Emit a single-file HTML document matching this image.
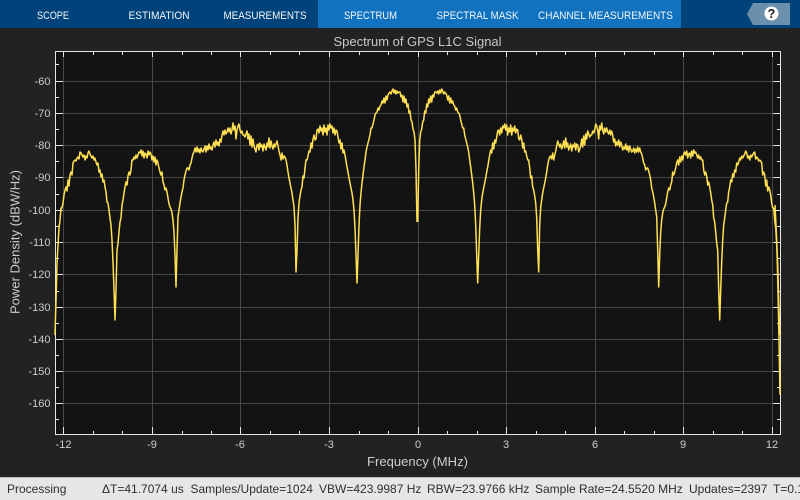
<!DOCTYPE html>
<html>
<head>
<meta charset="utf-8">
<style>
html,body{margin:0;padding:0;width:800px;height:500px;overflow:hidden;background:#222}
svg{display:block}
text{font-family:"Liberation Sans",sans-serif}
</style>
</head>
<body>
<svg width="800" height="500" viewBox="0 0 800 500" xmlns="http://www.w3.org/2000/svg">
<defs>
<clipPath id="c"><rect x="54" y="51" width="728" height="384"/></clipPath>
</defs>
<rect width="800" height="500" fill="#222222"/>
<!-- toolbar -->
<rect width="800" height="28" fill="#00437a"/>
<rect x="318" width="363" height="28" fill="#1172bf"/>
<g fill="#f2f6fa" font-size="11">
<text x="37" y="19" textLength="32" lengthAdjust="spacingAndGlyphs">SCOPE</text>
<text x="128.500" y="19" textLength="61" lengthAdjust="spacingAndGlyphs">ESTIMATION</text>
<text x="223.500" y="19" textLength="83" lengthAdjust="spacingAndGlyphs">MEASUREMENTS</text>
<text x="344" y="19" textLength="53" lengthAdjust="spacingAndGlyphs">SPECTRUM</text>
<text x="436.500" y="19" textLength="82" lengthAdjust="spacingAndGlyphs">SPECTRAL MASK</text>
<text x="538" y="19" textLength="135" lengthAdjust="spacingAndGlyphs">CHANNEL MEASUREMENTS</text>
</g>
<polygon points="747,14 753,3 790,3 790,25 753,25" fill="#6b90ae"/>
<circle cx="771.500" cy="13.500" r="7" fill="#ffffff"/>
<text x="771.500" y="18" font-size="12.500" font-weight="bold" fill="#1b1b1b" text-anchor="middle">?</text>
<!-- title -->
<text x="417.500" y="46" font-size="13" fill="#c8c8c8" text-anchor="middle" textLength="168" lengthAdjust="spacingAndGlyphs">Spectrum of GPS L1C Signal</text>
<!-- axes -->
<rect x="55.500" y="51.500" width="725" height="383" fill="#131313"/>
<g stroke="#474747" stroke-width="1" fill="none">
<path d="M63.500 52V434M152.500 52V434M240.500 52V434M329.500 52V434M418.500 52V434M506.500 52V434M595.500 52V434M683.500 52V434M772.500 52V434"/>
<path d="M56 81.500H780M56 113.500H780M56 145.500H780M56 177.500H780M56 210.500H780M56 242.500H780M56 274.500H780M56 307.500H780M56 339.500H780M56 371.500H780M56 403.500H780"/>
</g>
<!-- ticks -->
<g stroke="#e6e6e6" stroke-width="1" fill="none">
<path d="M63.500 52V57M152.500 52V57M240.500 52V57M329.500 52V57M418.500 52V57M506.500 52V57M595.500 52V57M683.500 52V57M772.500 52V57"/>
<path d="M93.500 52V55M122.500 52V55M182.500 52V55M211.500 52V55M270.500 52V55M299.500 52V55M359.500 52V55M388.500 52V55M447.500 52V55M477.500 52V55M536.500 52V55M565.500 52V55M624.500 52V55M654.500 52V55M713.500 52V55M742.500 52V55"/>
<path d="M63.500 434V427M152.500 434V427M240.500 434V427M329.500 434V427M418.500 434V427M506.500 434V427M595.500 434V427M683.500 434V427M772.500 434V427"/>
<path d="M93.500 434V431M122.500 434V431M182.500 434V431M211.500 434V431M270.500 434V431M299.500 434V431M359.500 434V431M388.500 434V431M447.500 434V431M477.500 434V431M536.500 434V431M565.500 434V431M624.500 434V431M654.500 434V431M713.500 434V431M742.500 434V431"/>
<path d="M56 81.500H63M56 113.500H63M56 145.500H63M56 177.500H63M56 210.500H63M56 242.500H63M56 274.500H63M56 307.500H63M56 339.500H63M56 371.500H63M56 403.500H63"/>
<path d="M56 64.500H59M56 97.500H59M56 129.500H59M56 161.500H59M56 194.500H59M56 226.500H59M56 258.500H59M56 291.500H59M56 323.500H59M56 355.500H59M56 387.500H59M56 419.500H59"/>
<path d="M780 81.500H773M780 113.500H773M780 145.500H773M780 177.500H773M780 210.500H773M780 242.500H773M780 274.500H773M780 307.500H773M780 339.500H773M780 371.500H773M780 403.500H773"/>
<path d="M780 64.500H777M780 97.500H777M780 129.500H777M780 161.500H777M780 194.500H777M780 226.500H777M780 258.500H777M780 291.500H777M780 323.500H777M780 355.500H777M780 387.500H777M780 419.500H777"/>
<rect x="55.500" y="51.500" width="725" height="383"/>
</g>
<!-- trace -->
<g clip-path="url(#c)" fill="none" stroke="#ffe052" stroke-width="1.500" stroke-linejoin="round">
<polyline id="t" points="55,335 56,300 57,263 58,245 59,228 60,220 61,208 62,208 63,203 64,195 65,190 66,187 67,191 68,180 69,186 70,175 71,172 72,175 73,163 74,161 75,160 76,161 77,158 78,157 79,159 80,152 81,153 82,155 83,157 84,155 85,160 86,156 87,158 88,153 89,151 90,154 91,156 92,158 93,156 94,160 95,158 96,162 97,165 98,163 99,172 100,170 101,177 102,174 103,182 104,180 105,187 106,192 107,202 108,203 109,210 110,218 111,225 112,240 113,262 114,290 115,320 116,290 117,250 118,243 119,232 120,222 121,218 122,205 123,200 124,193 125,187 126,182 127,185 128,176 129,172 130,175 131,170 132,160 133,160 134,157 135,159 136,155 137,158 138,155 139,152 140,153 141,150 142,156 143,151 144,158 145,153 146,154 147,158 148,151 149,155 150,152 151,154 152,160 153,156 154,162 155,157 156,165 157,160 158,163 159,168 160,172 161,175 162,172 163,182 164,185 165,190 166,188 167,192 168,198 169,204 170,207 171,209 172,213 173,220 174,232 175,255 176,287 177,250 178,217 179,210 180,203 181,197 182,192 183,188 184,180 185,175 186,171 187,168 188,168 189,170 190,165 191,163 192,158 193,154 194,152 195,148 196,152 197,147 198,152 199,149 200,153 201,148 202,151 203,152 204,149 205,146 206,152 207,146 208,150 209,144 210,149 211,147 212,150 213,145 214,142 215,147 216,140 217,145 218,142 219,146 220,139 221,142 222,135 223,131 224,135 225,130 226,134 227,132 228,128 229,132 230,128 231,134 232,130 233,123 234,130 235,126 236,139 237,130 238,126 239,124 240,130 241,133 242,131 243,135 244,135 245,137 246,134 247,131 248,139 249,134 250,145 251,136 252,147 253,139 254,146 255,149 256,152 257,145 258,144 259,150 260,143 261,147 262,145 263,151 264,144 265,147 266,150 267,143 268,147 269,138 270,148 271,141 272,146 273,149 274,144 275,147 276,144 277,141 278,146 279,151 280,155 281,160 282,153 283,159 284,156 285,157 286,160 287,165 288,172 289,178 290,183 291,188 292,193 293,200 294,207 295,225 296,272 297,250 298,218 299,203 300,196 301,190 302,187 303,176 304,178 305,168 306,160 307,160 308,156 309,151 310,152 311,143 312,148 313,139 314,135 315,140 316,139 317,130 318,129 319,133 320,126 321,131 322,128 323,135 324,125 325,132 326,128 327,135 328,125 329,130 330,124 331,128 332,126 333,133 334,128 335,135 336,130 337,131 338,137 339,143 340,140 341,149 342,143 343,153 344,150 345,155 346,161 347,167 348,172 349,178 350,183 351,188 352,193 353,200 354,210 355,228 356,255 357,283 358,255 359,225 360,205 361,193 362,183 363,175 364,167 365,160 366,152 367,147 368,143 369,139 370,135 371,128 372,128 373,124 374,120 375,115 376,113 377,112 378,108 379,110 380,106 381,105 382,101 383,103 384,98 385,103 386,96 387,100 388,95 389,93 390,92 391,94 392,91 393,89 394,93 395,90 396,94 397,91 398,93 399,92 400,92 401,97 402,95 403,102 404,96 405,103 406,99 407,107 408,104 409,113 410,111 411,120 412,122 413,129 414,132 415,140 416,170 417,222"/>
<use href="#t" transform="translate(834.700 0) scale(-1 1)"/>
<polyline points="775,205 776.700,240 778,290 779,340 780,395"/>
</g>
<!-- y tick labels -->
<g fill="#cccccc" font-size="11" text-anchor="end">
<text x="50.500" y="85">-60</text>
<text x="50.500" y="117">-70</text>
<text x="50.500" y="149">-80</text>
<text x="50.500" y="181">-90</text>
<text x="50.500" y="214">-100</text>
<text x="50.500" y="246">-110</text>
<text x="50.500" y="278">-120</text>
<text x="50.500" y="311">-130</text>
<text x="50.500" y="343">-140</text>
<text x="50.500" y="375">-150</text>
<text x="50.500" y="407">-160</text>
</g>
<!-- x tick labels -->
<g fill="#cccccc" font-size="11" text-anchor="middle">
<text x="63.500" y="448">-12</text>
<text x="152" y="448">-9</text>
<text x="240" y="448">-6</text>
<text x="329" y="448">-3</text>
<text x="418" y="448">0</text>
<text x="506" y="448">3</text>
<text x="595" y="448">6</text>
<text x="683" y="448">9</text>
<text x="772" y="448">12</text>
</g>
<text x="417.500" y="466" font-size="13" fill="#cccccc" text-anchor="middle" textLength="101" lengthAdjust="spacingAndGlyphs">Frequency (MHz)</text>
<text transform="translate(19.500 242) rotate(-90)" font-size="13" fill="#cccccc" text-anchor="middle" textLength="144" lengthAdjust="spacingAndGlyphs">Power Density (dBW/Hz)</text>
<!-- status bar -->
<rect y="477" width="800" height="23" fill="#e6e6e6"/>
<rect y="477" width="800" height="1" fill="#bdbdbd"/>
<g fill="#2e2e2e" font-size="12">
<text x="7" y="493">Processing</text>
<text x="102" y="493">ΔT=41.7074 us</text>
<text x="190.500" y="493">Samples/Update=1024</text>
<text x="319" y="493">VBW=423.9987 Hz</text>
<text x="427" y="493">RBW=23.9766 kHz</text>
<text x="535" y="493">Sample Rate=24.5520 MHz</text>
<text x="689" y="493">Updates=2397</text>
<text x="773" y="493">T=0.1</text>
</g>
</svg>
</body>
</html>
